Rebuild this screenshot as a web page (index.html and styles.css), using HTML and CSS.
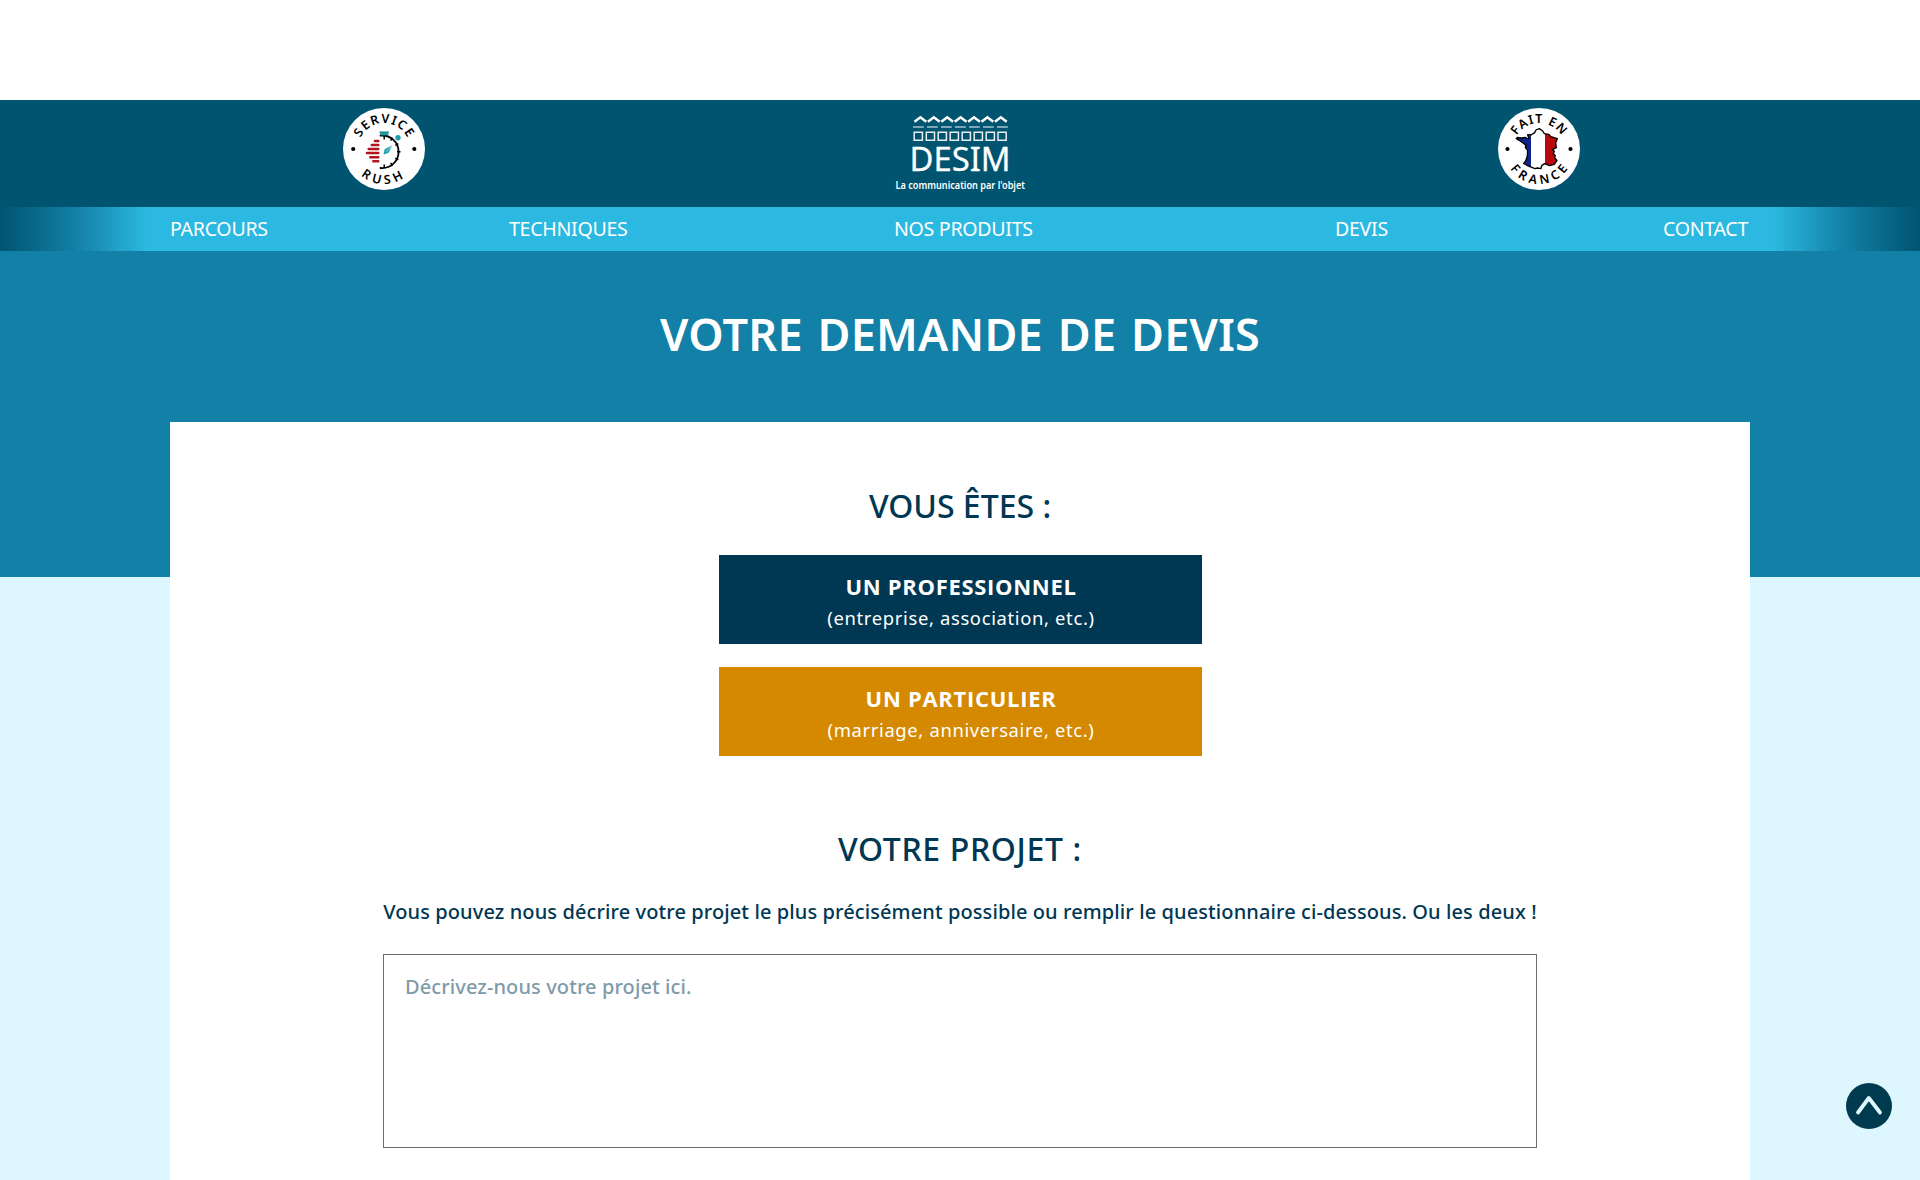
FILE: index.html
```html
<!DOCTYPE html>
<html lang="fr">
<head>
<meta charset="utf-8">
<title>DESIM - Votre demande de devis</title>
<link rel="stylesheet" href="styles.css">
</head>
<body>
<header class="header">
  <svg class="badge" viewBox="0 0 82 82" role="img" aria-label="Service rush">
    <defs>
      <path id="arc-top" d="M15 41a26 26 0 0 1 52 0"/>
      <path id="arc-bottom" d="M6 41a35 35 0 0 0 70 0"/>
    </defs>
    <circle cx="41" cy="41" r="41" fill="#fff"/>
    <text class="badge-text"><textPath href="#arc-top" startOffset="50%" textLength="58">SERVICE</textPath></text>
    <text class="badge-text"><textPath href="#arc-bottom" startOffset="48%" textLength="46">RUSH</textPath></text>
    <circle cx="10.2" cy="41" r="2.1"/><circle cx="71.3" cy="41" r="2.1"/>
    <path d="M37.5 27.6A16.3 16.3 0 1 1 37.5 60" fill="none" stroke="#000" stroke-width="1.8" stroke-linecap="round"/>
    <path d="M41.2 28v3.5M49.4 29.7l-1.7 3M55.3 35.7l-3 1.7M57.5 43.8h-3.5M55.3 51.9l-3-1.7M49.4 57.9l-1.7-3M41.2 60v-3.5" stroke="#000" stroke-width="1.5"/>
    <path d="M36.7 23.8h9l-1.2 3.4h-6.6z" fill="#1ba3ad" stroke="#145a60" stroke-width=".5"/>
    <circle cx="55" cy="29.8" r="2.7" fill="#1ba3ad"/>
    <path d="M49.3 37.2l-3.6 7.5-5.2 1.8 1.1-5.2z" fill="#1ba3ad"/><path d="M49.3 37.2l-6 6.4" stroke="#fff" stroke-width=".6"/>
    <path d="M32 33h3.3M28.8 37h6.5M25.7 41h9.6M24 45.1h11.3M27.3 49.3h8M30.3 53.3h5" stroke="#b0141c" stroke-width="2.5" stroke-linecap="round"/>
  </svg>
  <svg class="logo" viewBox="0 0 134 82" role="img" aria-label="DESIM">
    <g fill="none" stroke="#fff">
      <path d="M21.5 13.8l5.9-4.6 5.9 4.6M34.9 13.8l5.9-4.6 5.9 4.6M48.3 13.8l5.9-4.6 5.9 4.6M61.7 13.8l5.9-4.6 5.9 4.6M75.1 13.8l5.9-4.6 5.9 4.6M88.5 13.8l5.9-4.6 5.9 4.6M101.9 13.8l5.9-4.6 5.9 4.6" stroke-width="2.4"/>
      <path d="M20 19h95" stroke-width="1.4" stroke-dasharray="10.8 3.2" opacity=".65"/>
      <path d="M21.2 24.3h8.2v8h-8.2zM33.3 24.3h8.2v8h-8.2zM45.2 24.3h8.2v8h-8.2zM57.2 24.3h8.2v8h-8.2zM69.2 24.3h8.2v8h-8.2zM81.2 24.3h8.2v8h-8.2zM93.2 24.3h8.2v8h-8.2zM105 24.3h8.2v8H105z" stroke-width="1.5" opacity=".9"/>
    </g>
    <text class="logo-name" x="16.5" y="63" textLength="101" lengthAdjust="spacingAndGlyphs">DESIM</text>
    <text class="logo-tagline" x="2.5" y="80.6" textLength="129.5" lengthAdjust="spacingAndGlyphs">La communication par l'objet</text>
  </svg>
  <svg class="badge badge-france" viewBox="0 0 82 82" role="img" aria-label="Fait en France">
    <defs>
      <linearGradient id="flag" gradientUnits="userSpaceOnUse" x1="98" x2="220" y1="0" y2="0">
        <stop offset=".36" stop-color="#10228f"/><stop offset=".36" stop-color="#fff"/>
        <stop offset=".69" stop-color="#fff"/><stop offset=".69" stop-color="#b9090d"/>
      </linearGradient>
    </defs>
    <circle cx="41" cy="41" r="41" fill="#fff"/>
    <text class="badge-text"><textPath href="#arc-top" startOffset="50%" textLength="53">FAIT EN</textPath></text>
    <text class="badge-text"><textPath href="#arc-bottom" startOffset="50%" textLength="68">FRANCE</textPath></text>
    <circle cx="9.5" cy="41" r="2.1"/><circle cx="72.5" cy="41" r="2.1"/>
    <path transform="translate(-14 -10) scale(.3333)" d="M166 92L176 99 181 107 194 109 201 116 220 122 215 134 217 149 205 155 211 160 208 167 214 173 212 179 219 187 211 199 197 203 182 197 173 203 171 212 160 210 153 212 132 204 119 196 125 189 130 174 131 158 124 148 126 142 112 131 97 122 100 118 113 120 125 118 128 122 134 121 131 110 141 111 152 104 156 96z" fill="url(#flag)" stroke="#000" stroke-width="4" stroke-linejoin="round"/>
  </svg>
</header>
<nav class="nav">
  <a>PARCOURS</a><a>TECHNIQUES</a><a>NOS PRODUITS</a><a>DEVIS</a><a>CONTACT</a>
</nav>
<main class="page">
  <h1 class="title">VOTRE DEMANDE DE DEVIS</h1>
  <section class="card">
    <h2 class="subtitle">VOUS ÊTES :</h2>
    <div class="choices">
      <div class="choice"><strong class="choice-name">UN PROFESSIONNEL</strong><span class="choice-hint">(entreprise, association, etc.)</span></div>
      <div class="choice choice-orange"><strong class="choice-name">UN PARTICULIER</strong><span class="choice-hint">(marriage, anniversaire, etc.)</span></div>
    </div>
    <h2 class="subtitle subtitle-project">VOTRE PROJET :</h2>
    <p class="intro">Vous pouvez nous décrire votre projet le plus précisément possible ou remplir le questionnaire ci-dessous. Ou les deux !</p>
    <textarea class="description" placeholder="Décrivez-nous votre projet ici."></textarea>
  </section>
</main>
<div class="to-top">
  <svg viewBox="0 0 46 46"><path d="M12 29.5L22.8 15 34 29.5" fill="none" stroke="#def7ff" stroke-width="3.8" stroke-linecap="round" stroke-linejoin="round"/></svg>
</div>
</body>
</html>
```
FILE: styles.css
```css
* { box-sizing: border-box; }
body {
  margin: 0;
  padding-top: 100px;
  height: 1180px;
  overflow: hidden;
  background: #fff;
  font-family: "Open Sans", "Noto Sans", sans-serif;
  display: flex;
  flex-direction: column;
}
.header {
  flex: none;
  height: 107px;
  padding-top: 8px;
  background: #005470;
  display: grid;
  grid-template-columns: 2fr 1fr 2fr;
  justify-items: center;
  align-items: start;
}
.badge { width: 82px; height: 82px; }
.badge-france { margin-left: 6px; }
.badge-text { font: 600 12.5px "Noto Sans", sans-serif; text-anchor: middle; fill: #000; }
.logo { width: 134px; height: 82px; overflow: visible; }
.logo-name { font: 400 33.5px "Noto Sans", sans-serif; fill: #fff; stroke: #fff; stroke-width: .3px; }
.logo-tagline { font: 600 10.5px "Noto Sans", sans-serif; fill: #fff; }
.nav {
  flex: none;
  height: 44px;
  padding: 0 0 1px 170px;
  display: grid;
  grid-template-columns: 339px 385px 441px 328px 1fr;
  align-items: center;
  background: linear-gradient(90deg, #005470 0, #1380a7 4%, #2cb9e1 7.7%, #2cb9e1 92.3%, #1380a7 96%, #005470 100%);
  color: #fff;
  font: 400 19.6px "Noto Sans", sans-serif;
  letter-spacing: -.3px;
}
.page {
  flex: 1;
  min-height: 0;
  display: flex;
  flex-direction: column;
  align-items: center;
  background: linear-gradient(#1380a7 0 326px, #def7ff 326px);
}
.title {
  flex: none;
  margin: 53px 0 58px;
  color: #fff;
  font: 600 45px/60px "Noto Sans", sans-serif;
  letter-spacing: .2px;
  word-spacing: 3px;
}
.card {
  flex: 1;
  width: 1580px;
  padding-top: 64px;
  background: #fff;
  color: #003753;
  display: flex;
  flex-direction: column;
  align-items: center;
}
.subtitle {
  margin: 0 0 29px;
  font: 500 32px/40px "Noto Sans", sans-serif;
}
.subtitle-project { margin: 73px 0 28px; letter-spacing: .65px; }
.choices { display: flex; flex-direction: column; gap: 23px; }
.choice {
  width: 483px;
  height: 89px;
  padding: 15px 0 0 2px;
  background: #003753;
  color: #fff;
  display: flex;
  flex-direction: column;
  align-items: center;
}
.choice-orange { background: #d58900; }
.choice-name { font: 700 22px/32px "Open Sans", sans-serif; letter-spacing: .7px; }
.choice-hint { font: 400 18.4px/31px "Noto Sans", sans-serif; letter-spacing: .66px; }
.intro {
  margin: 0 0 27px;
  font: 500 20px/30px "Noto Sans", sans-serif;
  letter-spacing: .1px;
  white-space: nowrap;
}
.description {
  width: 1154px;
  height: 194px;
  padding: 17px 21px;
  border: 1px solid #6d6d6d;
  background: #fff;
  resize: none;
  font: 500 20px/30px "Noto Sans", sans-serif;
  letter-spacing: .1px;
}
.description::placeholder { color: #7f9ba9; opacity: 1; }
.to-top {
  position: fixed;
  left: 1846px;
  top: 1083px;
  width: 46px;
  height: 46px;
  border-radius: 50%;
  background: #003a4e;
}
```
